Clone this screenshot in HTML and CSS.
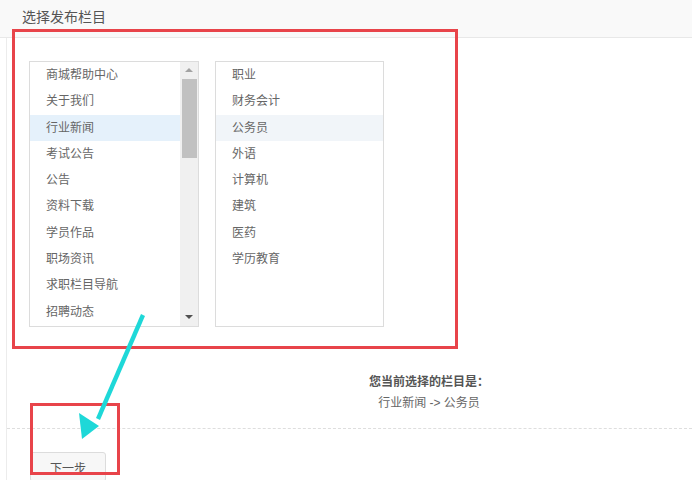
FILE: index.html
```html
<!DOCTYPE html>
<html lang="zh-CN">

<head>
    <meta charset="UTF-8">
    <meta name="viewport" content="width=device-width, initial-scale=1.0">
    <title>选择发布栏目</title>
    <link rel="stylesheet" href="styles.css">
</head>

<body>
    <div class="page-head">选择发布栏目</div>

    <div class="page-body">
        <div class="pickers">
            <div class="picker">
                <ul class="options">
                    <li>商城帮助中心</li>
                    <li>关于我们</li>
                    <li class="active">行业新闻</li>
                    <li>考试公告</li>
                    <li>公告</li>
                    <li>资料下载</li>
                    <li>学员作品</li>
                    <li>职场资讯</li>
                    <li>求职栏目导航</li>
                    <li>招聘动态</li>
                </ul>
                <div class="scrollbar">
                    <span class="arrow up"></span>
                    <span class="thumb"></span>
                    <span class="arrow down"></span>
                </div>
            </div>
            <div class="picker">
                <ul class="options">
                    <li>职业</li>
                    <li>财务会计</li>
                    <li class="active sub">公务员</li>
                    <li>外语</li>
                    <li>计算机</li>
                    <li>建筑</li>
                    <li>医药</li>
                    <li>学历教育</li>
                </ul>
            </div>
        </div>

        <div class="current">
            <p class="current-label">您当前选择的栏目是：</p>
            <p class="current-path">行业新闻 -&gt; 公务员</p>
        </div>

        <div class="actions">
            <button class="btn">下一步</button>
        </div>
    </div>

    <!-- marks drawn on top of the form -->
    <div class="mark mark-lists"></div>
    <div class="mark mark-btn"></div>
    <svg class="pointer" width="692" height="480" viewBox="0 0 692 480">
        <polygon points="141,314 145,316 100,420 96,418" fill="#1ed8d8" />
        <polygon points="82,439 79,413 99,426" fill="#1ed8d8" />
    </svg>
</body>

</html>
```

FILE: styles.css
```css
* {
    box-sizing: border-box;
}

body {
    margin: 0;
    background: #fff;
    font-family: "Liberation Sans", "Noto Sans CJK SC", sans-serif;
    font-size: 12px;
    color: #666;
    height: 480px;
    overflow: hidden;
    position: relative;
}

.page-head {
    height: 38px;
    padding-left: 22px;
    line-height: 34px;
    font-size: 14px;
    color: #555;
    background: #f9f9f9;
    border-bottom: 1px solid #e8e8e8;
}

.page-body {
    margin-left: 6px;
    border-left: 1px solid #ececec;
    height: 442px;
}

.pickers {
    display: flex;
    gap: 16px;
    padding: 23px 0 0 22px;
}

.picker {
    display: flex;
    width: 170px;
    height: 266px;
    border: 1px solid #dcdcdc;
    overflow: hidden;
}

.picker + .picker {
    width: 169px;
}

.options {
    flex: 1;
    list-style: none;
    margin: 0;
    padding: 0;
}

.options li {
    height: 26.3px;
    line-height: 26px;
    padding-left: 16px;
    white-space: nowrap;
}

.options li.active {
    background: #e5f1fb;
}

.options li.sub {
    background: #f1f5f9;
}

.scrollbar {
    width: 18px;
    background: #f0f0f0;
    display: flex;
    flex-direction: column;
    align-items: center;
}

.arrow {
    width: 0;
    height: 0;
    border-left: 4px solid transparent;
    border-right: 4px solid transparent;
}

.arrow.up {
    margin-top: 6px;
    border-bottom: 4px solid #a3a3a3;
}

.arrow.down {
    margin-top: auto;
    margin-bottom: 7px;
    border-top: 4px solid #505050;
}

.thumb {
    width: 15px;
    height: 79px;
    margin-top: 7px;
    background: #c1c1c1;
}

.current {
    width: 140px;
    margin: 43px 0 0 352px;
    text-align: center;
}

.current p {
    margin: 0;
    line-height: 22px;
}

.current-label {
    font-weight: bold;
    color: #555;
    font-family: "Noto Sans CJK SC", sans-serif;
}

.current-path {
    color: #666;
}

.actions {
    margin-top: 14px;
    padding-top: 23px;
    border-top: 1px dashed #dedede;
    padding-left: 23px;
}

.btn {
    width: 76px;
    height: 30px;
    font-family: inherit;
    font-size: 12px;
    color: #555;
    background: #f7f7f7;
    border: 1px solid #dcdcdc;
    border-radius: 3px;
}

.mark {
    position: absolute;
    border: 3px solid #e8444a;
}

.mark-lists {
    left: 12px;
    top: 29px;
    width: 446px;
    height: 320px;
}

.mark-btn {
    left: 30px;
    top: 403px;
    width: 90px;
    height: 72px;
}

.pointer {
    position: absolute;
    left: 0;
    top: 0;
}
```
